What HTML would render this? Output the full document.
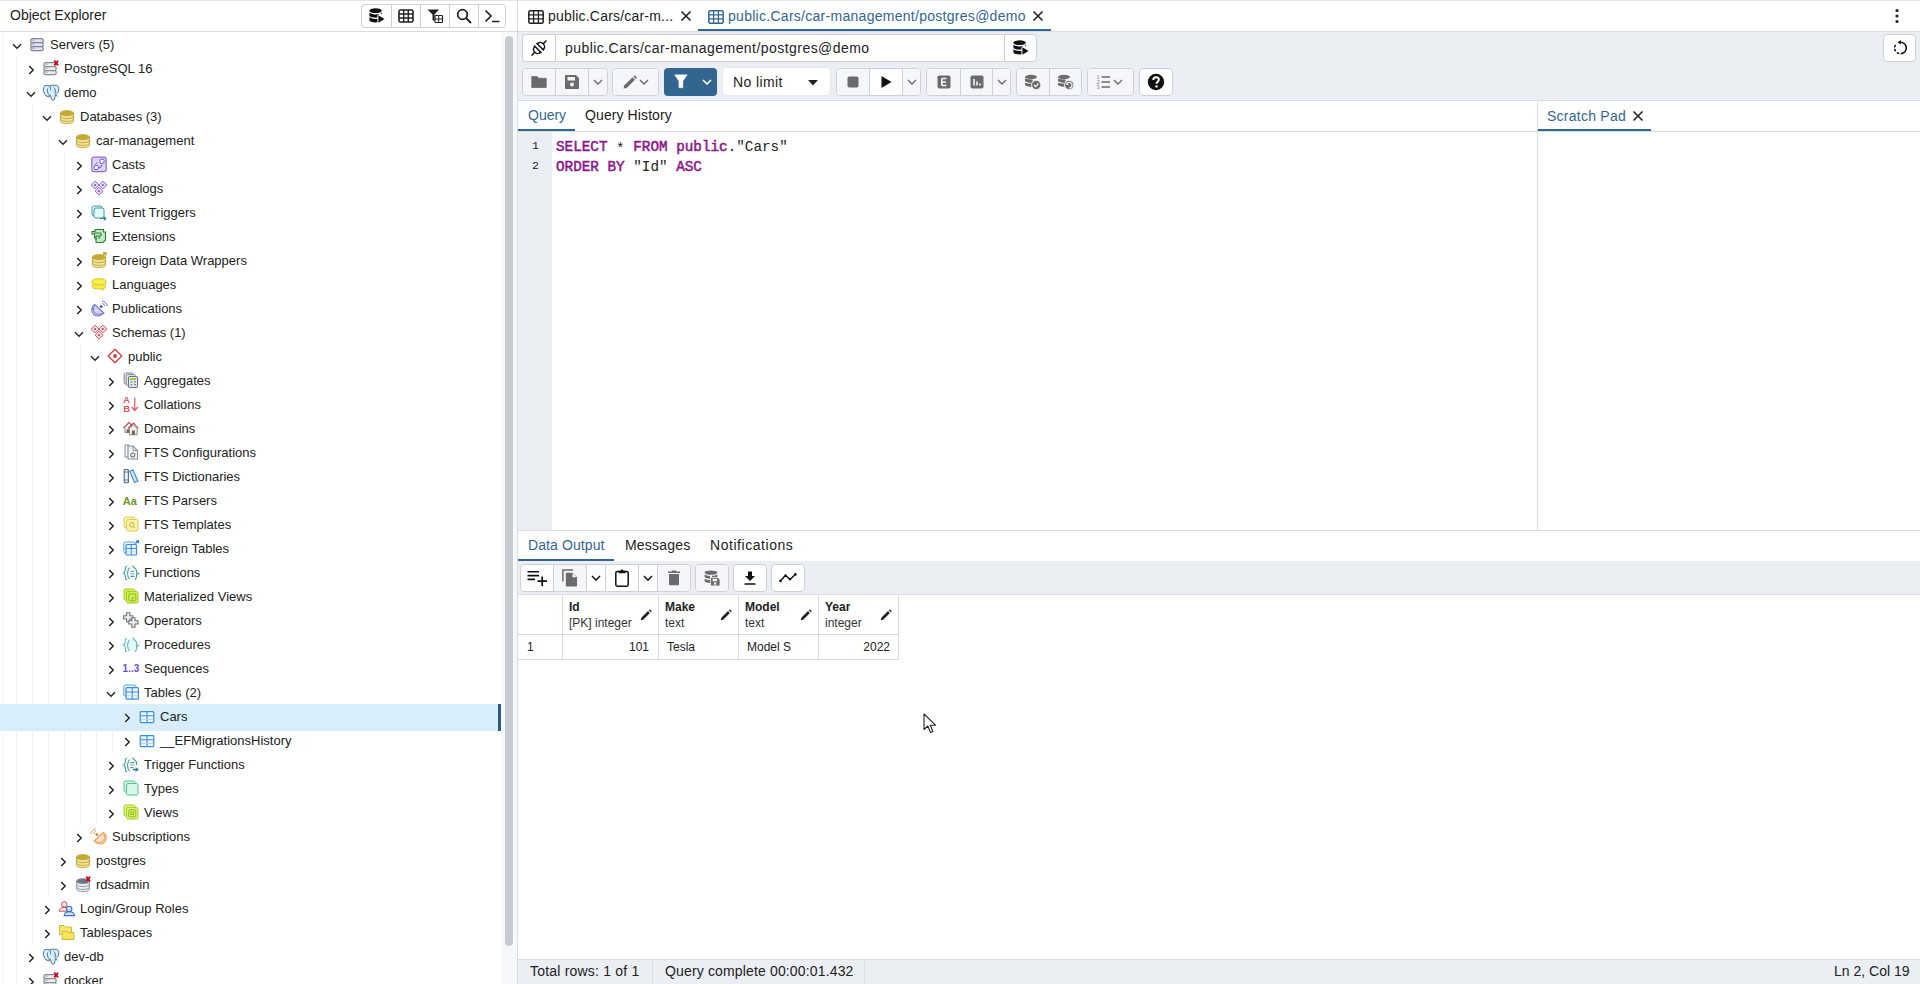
<!DOCTYPE html><html><head><meta charset="utf-8"><style>
*{box-sizing:border-box;margin:0;padding:0}
html,body{width:1920px;height:984px;overflow:hidden;background:#fff;font-family:"Liberation Sans",sans-serif;color:#222;font-size:14px}
.a{position:absolute}
.t{position:absolute;white-space:nowrap;line-height:1}
.bd{background:#d9dce1}
.row{position:absolute;left:0;width:501px;height:24px}
.lbl{position:absolute;top:1px;font-size:13px;line-height:24px;white-space:nowrap;color:#222}
.chev{position:absolute}
.ico{position:absolute;top:4px;width:16px;height:16px}
.btng{position:absolute;border:1px solid #cdd0d6;border-radius:4px;overflow:hidden;display:flex;background:#fff}
.btn{position:relative;height:100%;border-left:1px solid #cdd0d6;display:flex;align-items:center;justify-content:center}
.btn:first-child{border-left:none}
.dis{background:#f5f6f9}
</style></head><body>
<div class="a bd" style="left:0;top:0;width:1920px;height:1px;background:#e3e5ea"></div>
<div class="t" style="left:10px;top:8px;font-size:14px;color:#222">Object Explorer</div>
<div class="a bd" style="left:0;top:31px;width:517px;height:1px"></div>
<div class="a bd" style="left:517px;top:0;width:1px;height:984px"></div>
<div class="btng" style="left:361px;top:4px;width:145px;height:24px"><div class="btn" style="width:29px"><svg width="16" height="16" viewBox="0 0 16 16" style="display:block;overflow:visible"><ellipse cx="6.6" cy="2.7" rx="6.2" ry="2.4" fill="#111"/><path d="M0.4 4.6C1.2 5.8 3.6 6.4 6.6 6.4C8.2 6.4 9.4 6.2 10.4 5.9L8.4 7.4V9.6C7.8 9.7 7.2 9.7 6.6 9.7C3.4 9.7 0.4 8.9 0.4 7.6ZM12.8 4.6V6.4L11.6 5.7C12.2 5.4 12.6 5 12.8 4.6ZM0.4 9.1C1.2 10.3 3.6 10.9 6.6 10.9L8.4 10.8V14.3L6.6 14.4C3.4 14.4 0.4 13.5 0.4 12.2Z" fill="#111"/><path d="M9.4 7.2L15.6 11L9.4 14.8Z" fill="#111"/></svg></div><div class="btn" style="width:29px"><svg width="16" height="16" viewBox="0 0 16 16" style="display:block;overflow:visible"><rect x="1" y="2" width="14" height="12" rx="1.5" fill="none" stroke="#222" stroke-width="1.6"/><path d="M1 6H15M1 10H15M5.7 2V14M10.3 2V14" stroke="#222" stroke-width="1.4"/></svg></div><div class="btn" style="width:29px"><svg width="16" height="16" viewBox="0 0 16 16" style="display:block;overflow:visible"><path d="M0.5 1.5H12L7.5 6.5V13.5L5.5 12V6.5Z" fill="#222"/><rect x="8" y="7.5" width="7.5" height="7" rx="0.8" fill="none" stroke="#222" stroke-width="1.2"/><path d="M8 11H15.5M11.7 7.5V14.5" stroke="#222" stroke-width="1"/></svg></div><div class="btn" style="width:29px"><svg width="16" height="16" viewBox="0 0 16 16" style="display:block;overflow:visible"><circle cx="6.5" cy="6.5" r="4.8" fill="none" stroke="#222" stroke-width="1.8"/><path d="M10 10L15 15" stroke="#222" stroke-width="2"/></svg></div><div class="btn" style="width:27px"><svg width="16" height="16" viewBox="0 0 16 16" style="display:block;overflow:visible"><path d="M1.5 2.5L7 8L1.5 13.5" fill="none" stroke="#222" stroke-width="1.7"/><path d="M8 13.5H15.5" stroke="#222" stroke-width="1.6"/></svg></div></div>
<div class="a" style="left:501px;top:32px;width:16px;height:952px;background:#f7f8f9"></div>
<div class="a" style="left:505px;top:36px;width:8px;height:910px;background:#c8ccd2;border-radius:4px"></div>
<div class="a" style="left:0;top:32px;width:501px;height:952px;overflow:hidden">
<div class="a" style="left:2px;top:1px;width:1px;height:952px;background:#f4f5f6"></div>
<div class="a" style="left:16px;top:24px;width:1px;height:936px;background:#f1f2f4"></div>
<div class="a" style="left:32px;top:72px;width:1px;height:840px;background:#f1f2f4"></div>
<div class="a" style="left:48px;top:96px;width:1px;height:768px;background:#f1f2f4"></div>
<div class="a" style="left:64px;top:120px;width:1px;height:696px;background:#f1f2f4"></div>
<div class="a" style="left:80px;top:312px;width:1px;height:480px;background:#f1f2f4"></div>
<div class="a" style="left:96px;top:336px;width:1px;height:456px;background:#f1f2f4"></div>
<div class="a" style="left:112px;top:672px;width:1px;height:48px;background:#f1f2f4"></div>
<div class="row" style="top:0px">
<svg class="chev" style="left:12px;top:11px" width="10" height="7" viewBox="0 0 10 7"><path d="M1 1.2L5 5.2L9 1.2" fill="none" stroke="#222" stroke-width="1.4"/></svg>
<div class="ico" style="left:29px"><svg width="16" height="16" viewBox="0 0 16 16" style="display:block;overflow:visible"><rect x="1.7" y="2.6" width="12.6" height="4" rx="2" fill="#e4e5f2" stroke="#7d8290" stroke-width="1.1"/><path d="M3.5 4.2h2" stroke="#7d8290" stroke-width="0.9"/><rect x="1.7" y="6.6" width="12.6" height="4" rx="2" fill="#e4e5f2" stroke="#7d8290" stroke-width="1.1"/><path d="M3.5 8.2h2" stroke="#7d8290" stroke-width="0.9"/><rect x="1.7" y="10.6" width="12.6" height="4" rx="2" fill="#e4e5f2" stroke="#7d8290" stroke-width="1.1"/><path d="M3.5 12.2h2" stroke="#7d8290" stroke-width="0.9"/></svg></div>
<div class="lbl" style="left:50px">Servers (5)</div>
</div>
<div class="row" style="top:24px">
<svg class="chev" style="left:28px;top:9px" width="7" height="10" viewBox="0 0 7 10"><path d="M1.2 1L5.2 5L1.2 9" fill="none" stroke="#222" stroke-width="1.4"/></svg>
<div class="ico" style="left:43px"><svg width="16" height="16" viewBox="0 0 16 16" style="display:block;overflow:visible"><rect x="0.7" y="2.6" width="12.6" height="4" rx="2" fill="#eceef0" stroke="#8a8d94" stroke-width="1.1"/><path d="M2.5 4.2h2" stroke="#8a8d94" stroke-width="0.9"/><rect x="0.7" y="6.6" width="12.6" height="4" rx="2" fill="#eceef0" stroke="#8a8d94" stroke-width="1.1"/><path d="M2.5 8.2h2" stroke="#8a8d94" stroke-width="0.9"/><rect x="0.7" y="10.6" width="12.6" height="4" rx="2" fill="#eceef0" stroke="#8a8d94" stroke-width="1.1"/><path d="M2.5 12.2h2" stroke="#8a8d94" stroke-width="0.9"/><path d="M11.2 0.6L15.2 5.2M15.2 0.6L11.2 5.2" stroke="#d0021b" stroke-width="1.7"/></svg></div>
<div class="lbl" style="left:64px">PostgreSQL 16</div>
</div>
<div class="row" style="top:48px">
<svg class="chev" style="left:26px;top:11px" width="10" height="7" viewBox="0 0 10 7"><path d="M1 1.2L5 5.2L9 1.2" fill="none" stroke="#222" stroke-width="1.4"/></svg>
<div class="ico" style="left:43px"><svg width="16" height="16" viewBox="0 0 16 16" style="display:block;overflow:visible"><path d="M1.2 2.4C2 1.2 4.5 1 6.6 2C8 1 11.5 1 13.8 1.5C15.5 2.2 16 3.8 15.7 6C15.4 8 14 9.5 12.4 10.6C12 13 11.8 15 10.8 16C9.8 16.8 8.8 16.2 8.4 15C8 13.5 8 12.5 7.5 11.5C6 12 4 12.8 3 12C1.5 10.5 0.3 7 0.3 5C0.3 3.8 0.6 2.9 1.2 2.4Z" fill="#d6effb" stroke="#4b7094" stroke-width="1"/><path d="M4.6 4.5C4.2 7 4.6 9.5 6.2 10.8M10.4 3.4C12 4 12.5 6 12.3 9.4M12.5 10.6L14.8 12.6M7.3 11.2L5.3 13.4M6.6 2C7.5 3.5 7.8 5 7.6 6.5" fill="none" stroke="#4b7094" stroke-width="1"/></svg></div>
<div class="lbl" style="left:64px">demo</div>
</div>
<div class="row" style="top:72px">
<svg class="chev" style="left:42px;top:11px" width="10" height="7" viewBox="0 0 10 7"><path d="M1 1.2L5 5.2L9 1.2" fill="none" stroke="#222" stroke-width="1.4"/></svg>
<div class="ico" style="left:59px"><svg width="16" height="16" viewBox="0 0 16 16" style="display:block;overflow:visible"><path d="M1.6 5.2V13.2C1.6 14.6 4.5 15.6 8 15.6C11.5 15.6 14.4 14.6 14.4 13.2V5.2" fill="#f3e7a0" stroke="#bfa432" stroke-width="1"/><path d="M1.6 8.2C1.6 9.6 4.5 10.6 8 10.6C11.5 10.6 14.4 9.6 14.4 8.2M1.6 11C1.6 12.4 4.5 13.4 8 13.4C11.5 13.4 14.4 12.4 14.4 11" fill="none" stroke="#bfa432" stroke-width="1"/><ellipse cx="8" cy="5.2" rx="6.4" ry="2.6" fill="#c6ab38" stroke="#bfa432" stroke-width="0.8"/></svg></div>
<div class="lbl" style="left:80px">Databases (3)</div>
</div>
<div class="row" style="top:96px">
<svg class="chev" style="left:58px;top:11px" width="10" height="7" viewBox="0 0 10 7"><path d="M1 1.2L5 5.2L9 1.2" fill="none" stroke="#222" stroke-width="1.4"/></svg>
<div class="ico" style="left:75px"><svg width="16" height="16" viewBox="0 0 16 16" style="display:block;overflow:visible"><path d="M1.6 5.2V13.2C1.6 14.6 4.5 15.6 8 15.6C11.5 15.6 14.4 14.6 14.4 13.2V5.2" fill="#f3e7a0" stroke="#bfa432" stroke-width="1"/><path d="M1.6 8.2C1.6 9.6 4.5 10.6 8 10.6C11.5 10.6 14.4 9.6 14.4 8.2M1.6 11C1.6 12.4 4.5 13.4 8 13.4C11.5 13.4 14.4 12.4 14.4 11" fill="none" stroke="#bfa432" stroke-width="1"/><ellipse cx="8" cy="5.2" rx="6.4" ry="2.6" fill="#c6ab38" stroke="#bfa432" stroke-width="0.8"/></svg></div>
<div class="lbl" style="left:96px">car-management</div>
</div>
<div class="row" style="top:120px">
<svg class="chev" style="left:76px;top:9px" width="7" height="10" viewBox="0 0 7 10"><path d="M1.2 1L5.2 5L1.2 9" fill="none" stroke="#222" stroke-width="1.4"/></svg>
<div class="ico" style="left:91px"><svg width="16" height="16" viewBox="0 0 16 16" style="display:block;overflow:visible"><rect x="0.8" y="1.2" width="14.4" height="14.4" rx="2" fill="#dcd3f6" stroke="#8b70d2" stroke-width="1.2"/><rect x="9" y="3.2" width="4" height="4" rx="1" fill="#fff" stroke="#6f52c4" stroke-width="1"/><rect x="3.2" y="9.5" width="4" height="4" rx="1" fill="#fff" stroke="#6f52c4" stroke-width="1"/><path d="M4.5 8.5L6 6.5M7.5 12L10 11L11 8.5" fill="none" stroke="#6f52c4" stroke-width="1"/></svg></div>
<div class="lbl" style="left:112px">Casts</div>
</div>
<div class="row" style="top:144px">
<svg class="chev" style="left:76px;top:9px" width="7" height="10" viewBox="0 0 7 10"><path d="M1.2 1L5.2 5L1.2 9" fill="none" stroke="#222" stroke-width="1.4"/></svg>
<div class="ico" style="left:91px"><svg width="16" height="16" viewBox="0 0 16 16" style="display:block;overflow:visible"><path d="M4.2 1.1L8.1 5L4.2 8.9L0.30000000000000027 5Z" fill="#e6dcfb" stroke="#8a68d8" stroke-width="1"/><circle cx="4.2" cy="5" r="1" fill="#6a4fc0"/><path d="M11.8 1.1L15.700000000000001 5L11.8 8.9L7.9 5Z" fill="#e6dcfb" stroke="#8a68d8" stroke-width="1"/><circle cx="11.8" cy="5" r="1" fill="#6a4fc0"/><path d="M8 7.299999999999999L11.9 11.2L8 15.1L4.1 11.2Z" fill="#e6dcfb" stroke="#8a68d8" stroke-width="1"/><circle cx="8" cy="11.2" r="1" fill="#6a4fc0"/></svg></div>
<div class="lbl" style="left:112px">Catalogs</div>
</div>
<div class="row" style="top:168px">
<svg class="chev" style="left:76px;top:9px" width="7" height="10" viewBox="0 0 7 10"><path d="M1.2 1L5.2 5L1.2 9" fill="none" stroke="#222" stroke-width="1.4"/></svg>
<div class="ico" style="left:91px"><svg width="16" height="16" viewBox="0 0 16 16" style="display:block;overflow:visible"><rect x="1" y="2" width="10" height="10" rx="2" fill="#e3f8f8" stroke="#3b9ea0" stroke-width="1"/><rect x="3" y="4" width="10" height="10" rx="2" fill="#e3f8f8" stroke="#3b9ea0" stroke-width="1"/><path d="M9 14.5H14.5M12.8 12.6L14.8 14.5L12.8 16.4" fill="none" stroke="#2f8a8c" stroke-width="1.2"/></svg></div>
<div class="lbl" style="left:112px">Event Triggers</div>
</div>
<div class="row" style="top:192px">
<svg class="chev" style="left:76px;top:9px" width="7" height="10" viewBox="0 0 7 10"><path d="M1.2 1L5.2 5L1.2 9" fill="none" stroke="#222" stroke-width="1.4"/></svg>
<div class="ico" style="left:91px"><svg width="16" height="16" viewBox="0 0 16 16" style="display:block;overflow:visible"><path d="M4 1.5H12.5V4H14.5V12L12 14.5H5V10H3.5V6H1V3.5H4Z" fill="#bfe9c3" stroke="#2f7d34" stroke-width="1.1"/><path d="M3 5H10V8H5V12M8 8V11" fill="none" stroke="#2f7d34" stroke-width="1"/></svg></div>
<div class="lbl" style="left:112px">Extensions</div>
</div>
<div class="row" style="top:216px">
<svg class="chev" style="left:76px;top:9px" width="7" height="10" viewBox="0 0 7 10"><path d="M1.2 1L5.2 5L1.2 9" fill="none" stroke="#222" stroke-width="1.4"/></svg>
<div class="ico" style="left:91px"><svg width="16" height="16" viewBox="0 0 16 16" style="display:block;overflow:visible"><path d="M1.6 5.2V13.2C1.6 14.6 4.5 15.6 8 15.6C11.5 15.6 14.4 14.6 14.4 13.2V5.2" fill="#f3e7a0" stroke="#bfa432" stroke-width="1"/><path d="M1.6 8.2C1.6 9.6 4.5 10.6 8 10.6C11.5 10.6 14.4 9.6 14.4 8.2M1.6 11C1.6 12.4 4.5 13.4 8 13.4C11.5 13.4 14.4 12.4 14.4 11" fill="none" stroke="#bfa432" stroke-width="1"/><ellipse cx="8" cy="5.2" rx="6.4" ry="2.6" fill="#c6ab38" stroke="#bfa432" stroke-width="0.8"/><path d="M10.5 4.5L14.5 0.8M12 0.8H14.8V3.6" fill="none" stroke="#c6ab38" stroke-width="1.6"/></svg></div>
<div class="lbl" style="left:112px">Foreign Data Wrappers</div>
</div>
<div class="row" style="top:240px">
<svg class="chev" style="left:76px;top:9px" width="7" height="10" viewBox="0 0 7 10"><path d="M1.2 1L5.2 5L1.2 9" fill="none" stroke="#222" stroke-width="1.4"/></svg>
<div class="ico" style="left:91px"><svg width="16" height="16" viewBox="0 0 16 16" style="display:block;overflow:visible"><path d="M1 6C1 3.5 4 2.8 8 2.8C12 2.8 15 3.5 15 6C15 7.2 14.3 8 13.5 8.4C14.5 9 14.8 9.8 14.5 11C14.1 12.3 12.5 12.6 11.8 12.6L12 14.6L10 12.8C8 12.9 2.2 13 1.3 11C0.9 10 1.3 9 2.4 8.4C1.5 7.9 1 7.2 1 6Z" fill="#f9ec4c" stroke="#d9c41d" stroke-width="1"/><path d="M2.6 8.4C6 9.2 10 9.2 13.5 8.4" fill="none" stroke="#d9c41d" stroke-width="1"/></svg></div>
<div class="lbl" style="left:112px">Languages</div>
</div>
<div class="row" style="top:264px">
<svg class="chev" style="left:76px;top:9px" width="7" height="10" viewBox="0 0 7 10"><path d="M1.2 1L5.2 5L1.2 9" fill="none" stroke="#222" stroke-width="1.4"/></svg>
<div class="ico" style="left:91px"><svg width="16" height="16" viewBox="0 0 16 16" style="display:block;overflow:visible"><path d="M3.6 4.3L12.9 13.1C10 15.6 6 16.6 3.4 15C0.4 13 -0.6 7.8 3.6 4.3Z" fill="#d2d4f4" stroke="#6c72c9" stroke-width="1.1"/><path d="M3.4 6.2C1.8 8.4 2.2 11.4 4.2 13.2C6.2 14.6 9.2 14.6 11.4 13.4" fill="none" stroke="#6c72c9" stroke-width="0.9"/><circle cx="10.2" cy="6.6" r="1.4" fill="#3f46b0"/><path d="M11.1 3.3C12.3 3.8 13.3 4.7 13.8 5.9M11.1 0.9C13.6 1.6 15.6 3.4 16.4 5.9" fill="none" stroke="#6c72c9" stroke-width="1"/></svg></div>
<div class="lbl" style="left:112px">Publications</div>
</div>
<div class="row" style="top:288px">
<svg class="chev" style="left:74px;top:11px" width="10" height="7" viewBox="0 0 10 7"><path d="M1 1.2L5 5.2L9 1.2" fill="none" stroke="#222" stroke-width="1.4"/></svg>
<div class="ico" style="left:91px"><svg width="16" height="16" viewBox="0 0 16 16" style="display:block;overflow:visible"><path d="M4.2 1.1L8.1 5L4.2 8.9L0.30000000000000027 5Z" fill="#fde3e3" stroke="#d9535a" stroke-width="1"/><circle cx="4.2" cy="5" r="1" fill="#c9303a"/><path d="M11.8 1.1L15.700000000000001 5L11.8 8.9L7.9 5Z" fill="#fde3e3" stroke="#d9535a" stroke-width="1"/><circle cx="11.8" cy="5" r="1" fill="#c9303a"/><path d="M8 7.299999999999999L11.9 11.2L8 15.1L4.1 11.2Z" fill="#fde3e3" stroke="#d9535a" stroke-width="1"/><circle cx="8" cy="11.2" r="1" fill="#c9303a"/></svg></div>
<div class="lbl" style="left:112px">Schemas (1)</div>
</div>
<div class="row" style="top:312px">
<svg class="chev" style="left:90px;top:11px" width="10" height="7" viewBox="0 0 10 7"><path d="M1 1.2L5 5.2L9 1.2" fill="none" stroke="#222" stroke-width="1.4"/></svg>
<div class="ico" style="left:107px"><svg width="16" height="16" viewBox="0 0 16 16" style="display:block;overflow:visible"><path d="M8 1.2L14.8 8L8 14.8L1.2 8Z" fill="#fff" stroke="#d23f45" stroke-width="1.3"/><circle cx="8" cy="8" r="1.9" fill="#d23f45"/></svg></div>
<div class="lbl" style="left:128px">public</div>
</div>
<div class="row" style="top:336px">
<svg class="chev" style="left:108px;top:9px" width="7" height="10" viewBox="0 0 7 10"><path d="M1.2 1L5.2 5L1.2 9" fill="none" stroke="#222" stroke-width="1.4"/></svg>
<div class="ico" style="left:123px"><svg width="16" height="16" viewBox="0 0 16 16" style="display:block;overflow:visible"><rect x="1.2" y="1" width="9" height="11" rx="1.5" fill="#eceef3" stroke="#7d8290" stroke-width="1"/><rect x="3.2" y="2.6" width="9" height="11" rx="1.5" fill="#eceef3" stroke="#7d8290" stroke-width="1"/><rect x="5.5" y="4.5" width="9" height="11" rx="1.5" fill="#e8ecf3" stroke="#6c717c" stroke-width="1.1"/><rect x="7" y="6" width="6" height="2.2" fill="#9fc93c"/><path d="M7.5 10h2M11 10h2M7.5 12.8h2M11 12.8h2" stroke="#7d8fb0" stroke-width="1.4"/></svg></div>
<div class="lbl" style="left:144px">Aggregates</div>
</div>
<div class="row" style="top:360px">
<svg class="chev" style="left:108px;top:9px" width="7" height="10" viewBox="0 0 7 10"><path d="M1.2 1L5.2 5L1.2 9" fill="none" stroke="#222" stroke-width="1.4"/></svg>
<div class="ico" style="left:123px"><svg width="16" height="16" viewBox="0 0 16 16" style="display:block;overflow:visible"><text x="0" y="7.4" font-family="Liberation Sans" font-weight="bold" font-size="9.6" fill="#dd5a5f">A</text><text x="0.2" y="15.8" font-family="Liberation Sans" font-weight="bold" font-size="9.6" fill="#dd5a5f">B</text><path d="M11.8 1.5V14.2M8.8 11L11.8 14.5L14.8 11" fill="none" stroke="#dd5a5f" stroke-width="1.2"/></svg></div>
<div class="lbl" style="left:144px">Collations</div>
</div>
<div class="row" style="top:384px">
<svg class="chev" style="left:108px;top:9px" width="7" height="10" viewBox="0 0 7 10"><path d="M1.2 1L5.2 5L1.2 9" fill="none" stroke="#222" stroke-width="1.4"/></svg>
<div class="ico" style="left:123px"><svg width="16" height="16" viewBox="0 0 16 16" style="display:block;overflow:visible"><path d="M0.5 8L6 2.5L11 7.5" fill="none" stroke="#c6464e" stroke-width="1.1"/><path d="M2 7.5V12.5H8V7.5" fill="#e6eef2" stroke="#7c8288" stroke-width="0.9"/><path d="M5 8.5L10.5 3L15.5 8.5" fill="none" stroke="#c6464e" stroke-width="1.1"/><path d="M6.5 8.5V14.8H14.2V8.5L10.3 4.7Z" fill="#e6eef2" stroke="#7c8288" stroke-width="0.9"/><rect x="9" y="10.5" width="2.8" height="4.3" fill="#8b5a2b"/><rect x="3.7" y="9.5" width="2.3" height="3" fill="#8b5a2b"/></svg></div>
<div class="lbl" style="left:144px">Domains</div>
</div>
<div class="row" style="top:408px">
<svg class="chev" style="left:108px;top:9px" width="7" height="10" viewBox="0 0 7 10"><path d="M1.2 1L5.2 5L1.2 9" fill="none" stroke="#222" stroke-width="1.4"/></svg>
<div class="ico" style="left:123px"><svg width="16" height="16" viewBox="0 0 16 16" style="display:block;overflow:visible"><path d="M2 1H6V13H2Z" fill="#f4f5f7" stroke="#8a8f98" stroke-width="1"/><path d="M5 2H10L14.5 6.5V15H5Z" fill="#f4f5f7" stroke="#8a8f98" stroke-width="1.1"/><path d="M10 2V6.5H14.5" fill="none" stroke="#8a8f98" stroke-width="1"/><circle cx="9.8" cy="11" r="2" fill="none" stroke="#6e737c" stroke-width="1.1"/></svg></div>
<div class="lbl" style="left:144px">FTS Configurations</div>
</div>
<div class="row" style="top:432px">
<svg class="chev" style="left:108px;top:9px" width="7" height="10" viewBox="0 0 7 10"><path d="M1.2 1L5.2 5L1.2 9" fill="none" stroke="#222" stroke-width="1.4"/></svg>
<div class="ico" style="left:123px"><svg width="16" height="16" viewBox="0 0 16 16" style="display:block;overflow:visible"><rect x="1.2" y="1.5" width="4.2" height="13.3" rx="0.8" fill="#e7f0fa" stroke="#5e6a7c" stroke-width="1.1"/><path d="M1.2 4H5.4M1.2 12H5.4" stroke="#5e6a7c" stroke-width="0.9"/><path d="M6.8 3.2L10 2L14.8 13.2L11.6 14.5Z" fill="#d3e9fb" stroke="#3b8ad8" stroke-width="1.1"/></svg></div>
<div class="lbl" style="left:144px">FTS Dictionaries</div>
</div>
<div class="row" style="top:456px">
<svg class="chev" style="left:108px;top:9px" width="7" height="10" viewBox="0 0 7 10"><path d="M1.2 1L5.2 5L1.2 9" fill="none" stroke="#222" stroke-width="1.4"/></svg>
<div class="ico" style="left:123px"><svg width="16" height="16" viewBox="0 0 16 16" style="display:block;overflow:visible"><text x="-0.3" y="13" font-family="Liberation Sans" font-weight="bold" font-size="11" fill="#6b9a1e">Aa</text></svg></div>
<div class="lbl" style="left:144px">FTS Parsers</div>
</div>
<div class="row" style="top:480px">
<svg class="chev" style="left:108px;top:9px" width="7" height="10" viewBox="0 0 7 10"><path d="M1.2 1L5.2 5L1.2 9" fill="none" stroke="#222" stroke-width="1.4"/></svg>
<div class="ico" style="left:123px"><svg width="16" height="16" viewBox="0 0 16 16" style="display:block;overflow:visible"><rect x="1" y="1" width="11" height="11" rx="2" fill="#faf3a8" stroke="#d8cb58" stroke-width="1"/><rect x="3.5" y="3.5" width="11.5" height="11.5" rx="2" fill="#faf3a8" stroke="#d8cb58" stroke-width="1"/><circle cx="8.8" cy="8.8" r="2.3" fill="none" stroke="#b6a83a" stroke-width="0.9"/><path d="M10.5 10.5L12.3 12.3" stroke="#b6a83a" stroke-width="0.9"/></svg></div>
<div class="lbl" style="left:144px">FTS Templates</div>
</div>
<div class="row" style="top:504px">
<svg class="chev" style="left:108px;top:9px" width="7" height="10" viewBox="0 0 7 10"><path d="M1.2 1L5.2 5L1.2 9" fill="none" stroke="#222" stroke-width="1.4"/></svg>
<div class="ico" style="left:123px"><svg width="16" height="16" viewBox="0 0 16 16" style="display:block;overflow:visible"><rect x="0.8" y="2" width="11" height="11" rx="1.5" fill="#e8f4fd" stroke="#5aa2e0" stroke-width="1"/><rect x="3" y="4.5" width="10.5" height="10.5" rx="1" fill="#eaf5fd" stroke="#3a8fd9" stroke-width="1.2"/><path d="M3 8.49H13.5 M8.25 4.5V15.0" stroke="#3a8fd9" stroke-width="1.1"/><path d="M4 11.85H12.5" stroke="#c4c9d0" stroke-width="0.9"/><path d="M12.5 3.5L15.3 0.8M13.2 0.8H15.4V3" fill="none" stroke="#2c7bd0" stroke-width="1.2"/></svg></div>
<div class="lbl" style="left:144px">Foreign Tables</div>
</div>
<div class="row" style="top:528px">
<svg class="chev" style="left:108px;top:9px" width="7" height="10" viewBox="0 0 7 10"><path d="M1.2 1L5.2 5L1.2 9" fill="none" stroke="#222" stroke-width="1.4"/></svg>
<div class="ico" style="left:123px"><svg width="16" height="16" viewBox="0 0 16 16" style="display:block;overflow:visible"><path d="M3.8 2C2.4 2.3 2.3 3.5 2.3 5.5C2.3 7.5 2 8.5 0.6 9C2 9.5 2.3 10.5 2.3 12.5C2.3 14.5 2.6 15.5 3.8 15.8 M6.6 3.6C4.9 5.2 4.6 7.6 4.6 9.4C4.6 11.2 4.9 13.4 6.6 15.2 M9.2 2C11 2.4 11.3 4 12.6 4.8C13.6 5.5 13.7 7.5 13.7 9L15.4 9.6L13.7 10.2C13.7 12.5 13.6 14.5 11.8 15.8" fill="none" stroke="#3f9b9c" stroke-width="1.1"/><path d="M7.4 7.2H11.4M7.4 12.4H11.4" stroke="#3f9b9c" stroke-width="1.1"/><path d="M7.4 9.8H11.4" stroke="#8fb5b6" stroke-width="1.3"/></svg></div>
<div class="lbl" style="left:144px">Functions</div>
</div>
<div class="row" style="top:552px">
<svg class="chev" style="left:108px;top:9px" width="7" height="10" viewBox="0 0 7 10"><path d="M1.2 1L5.2 5L1.2 9" fill="none" stroke="#222" stroke-width="1.4"/></svg>
<div class="ico" style="left:123px"><svg width="16" height="16" viewBox="0 0 16 16" style="display:block;overflow:visible"><rect x="1" y="1" width="11" height="11" rx="1.5" fill="#d3f05a" stroke="#a2cc22" stroke-width="1"/><rect x="3.5" y="3.5" width="11.5" height="11.5" rx="1.5" fill="#d3f05a" stroke="#a2cc22" stroke-width="1"/><rect x="5.8" y="5.8" width="7" height="7" rx="1" fill="none" stroke="#8cb81a" stroke-width="1"/><path d="M9.3 12.8V9.3H11" fill="none" stroke="#8cb81a" stroke-width="1"/></svg></div>
<div class="lbl" style="left:144px">Materialized Views</div>
</div>
<div class="row" style="top:576px">
<svg class="chev" style="left:108px;top:9px" width="7" height="10" viewBox="0 0 7 10"><path d="M1.2 1L5.2 5L1.2 9" fill="none" stroke="#222" stroke-width="1.4"/></svg>
<div class="ico" style="left:123px"><svg width="16" height="16" viewBox="0 0 16 16" style="display:block;overflow:visible"><path d="M3.6 0.8H6.8V3.8H9.8V7H6.8V10H3.6V7H0.6V3.8H3.6Z" fill="#eceef1" stroke="#6d7178" stroke-width="1.1"/><path d="M8.8 5.8H12V8.8H15V12H12V15.2H8.8V12H5.8V8.8H8.8Z" fill="#eceef1" stroke="#6d7178" stroke-width="1.1"/></svg></div>
<div class="lbl" style="left:144px">Operators</div>
</div>
<div class="row" style="top:600px">
<svg class="chev" style="left:108px;top:9px" width="7" height="10" viewBox="0 0 7 10"><path d="M1.2 1L5.2 5L1.2 9" fill="none" stroke="#222" stroke-width="1.4"/></svg>
<div class="ico" style="left:123px"><svg width="16" height="16" viewBox="0 0 16 16" style="display:block;overflow:visible"><path d="M5.5 9.4C5.5 6 8 3.6 10 3.6C12 3.6 13 6.5 13 9.4C13 12.3 12 15.2 10 15.2C8 15.2 5.5 12.8 5.5 9.4Z" fill="#e2f9fb" stroke="none"/><path d="M3.8 2C2.4 2.3 2.3 3.5 2.3 5.5C2.3 7.5 2 8.5 0.6 9C2 9.5 2.3 10.5 2.3 12.5C2.3 14.5 2.6 15.5 3.8 15.8 M6.6 3.6C4.9 5.2 4.6 7.6 4.6 9.4C4.6 11.2 4.9 13.4 6.6 15.2 M9.2 2C11 2.4 11.3 4 12.6 4.8C13.6 5.5 13.7 7.5 13.7 9L15.4 9.6L13.7 10.2C13.7 12.5 13.6 14.5 11.8 15.8" fill="none" stroke="#56b8ba" stroke-width="1.1"/></svg></div>
<div class="lbl" style="left:144px">Procedures</div>
</div>
<div class="row" style="top:624px">
<svg class="chev" style="left:108px;top:9px" width="7" height="10" viewBox="0 0 7 10"><path d="M1.2 1L5.2 5L1.2 9" fill="none" stroke="#222" stroke-width="1.4"/></svg>
<div class="ico" style="left:123px"><svg width="16" height="16" viewBox="0 0 16 16" style="display:block;overflow:visible"><text x="-0.4" y="12" font-family="Liberation Sans" font-weight="bold" font-size="10" fill="#6c4fbf">1..3</text></svg></div>
<div class="lbl" style="left:144px">Sequences</div>
</div>
<div class="row" style="top:648px">
<svg class="chev" style="left:106px;top:11px" width="10" height="7" viewBox="0 0 10 7"><path d="M1 1.2L5 5.2L9 1.2" fill="none" stroke="#222" stroke-width="1.4"/></svg>
<div class="ico" style="left:123px"><svg width="16" height="16" viewBox="0 0 16 16" style="display:block;overflow:visible"><rect x="0.8" y="1" width="12" height="11" rx="1.5" fill="#e8f4fd" stroke="#5aa2e0" stroke-width="1"/><rect x="3" y="3.6" width="12.4" height="11.6" rx="1" fill="#eaf5fd" stroke="#3a8fd9" stroke-width="1.2"/><path d="M3 8.008H15.4 M9.2 3.6V15.2" stroke="#3a8fd9" stroke-width="1.1"/><path d="M4 11.719999999999999H14.4" stroke="#c4c9d0" stroke-width="0.9"/></svg></div>
<div class="lbl" style="left:144px">Tables (2)</div>
</div>
<div class="row" style="top:672px">
<div class="a" style="left:0;top:0;width:501px;height:27px;background:#d8eefa"></div><div class="a" style="left:498px;top:0;width:3px;height:27px;background:#2c5b80"></div>
<svg class="chev" style="left:124px;top:9px" width="7" height="10" viewBox="0 0 7 10"><path d="M1.2 1L5.2 5L1.2 9" fill="none" stroke="#222" stroke-width="1.4"/></svg>
<div class="ico" style="left:139px"><svg width="16" height="16" viewBox="0 0 16 16" style="display:block;overflow:visible"><rect x="1.2" y="3.6" width="13.6" height="11" rx="1" fill="#eaf5fd" stroke="#3a8fd9" stroke-width="1.2"/><path d="M1.2 7.779999999999999H14.799999999999999 M8.0 3.6V14.6" stroke="#3a8fd9" stroke-width="1.1"/><path d="M2.2 11.299999999999999H13.799999999999999" stroke="#c4c9d0" stroke-width="0.9"/></svg></div>
<div class="lbl" style="left:160px">Cars</div>
</div>
<div class="row" style="top:696px">
<svg class="chev" style="left:124px;top:9px" width="7" height="10" viewBox="0 0 7 10"><path d="M1.2 1L5.2 5L1.2 9" fill="none" stroke="#222" stroke-width="1.4"/></svg>
<div class="ico" style="left:139px"><svg width="16" height="16" viewBox="0 0 16 16" style="display:block;overflow:visible"><rect x="1.2" y="3.6" width="13.6" height="11" rx="1" fill="#eaf5fd" stroke="#3a8fd9" stroke-width="1.2"/><path d="M1.2 7.779999999999999H14.799999999999999 M8.0 3.6V14.6" stroke="#3a8fd9" stroke-width="1.1"/><path d="M2.2 11.299999999999999H13.799999999999999" stroke="#c4c9d0" stroke-width="0.9"/></svg></div>
<div class="lbl" style="left:160px">__EFMigrationsHistory</div>
</div>
<div class="row" style="top:720px">
<svg class="chev" style="left:108px;top:9px" width="7" height="10" viewBox="0 0 7 10"><path d="M1.2 1L5.2 5L1.2 9" fill="none" stroke="#222" stroke-width="1.4"/></svg>
<div class="ico" style="left:123px"><svg width="16" height="16" viewBox="0 0 16 16" style="display:block;overflow:visible"><path d="M3.8 2C2.4 2.3 2.3 3.5 2.3 5.5C2.3 7.5 2 8.5 0.6 9C2 9.5 2.3 10.5 2.3 12.5C2.3 14.5 2.6 15.5 3.8 15.8 M6.6 3.6C4.9 5.2 4.6 7.6 4.6 9.4C4.6 11.2 4.9 13.4 6.6 15.2 M9.2 2C11 2.4 11.3 4 12.6 4.8C13.6 5.5 13.7 7.5 13.7 9" fill="none" stroke="#3f9b9c" stroke-width="1.1"/><path d="M7.4 6.6H11.4M7.4 11.6H10.5" stroke="#3f9b9c" stroke-width="1.1"/><path d="M7.4 9.1H11.4" stroke="#8fb5b6" stroke-width="1.3"/><path d="M10 13.6H13.2" stroke="#2f7f8a" stroke-width="1.5"/><path d="M12.6 11.2L16 13.6L12.6 16Z" fill="#2f7f8a"/></svg></div>
<div class="lbl" style="left:144px">Trigger Functions</div>
</div>
<div class="row" style="top:744px">
<svg class="chev" style="left:108px;top:9px" width="7" height="10" viewBox="0 0 7 10"><path d="M1.2 1L5.2 5L1.2 9" fill="none" stroke="#222" stroke-width="1.4"/></svg>
<div class="ico" style="left:123px"><svg width="16" height="16" viewBox="0 0 16 16" style="display:block;overflow:visible"><rect x="1" y="1" width="11" height="11" rx="1.5" fill="#d6f7e8" stroke="#53c08d" stroke-width="1"/><rect x="3.5" y="3.5" width="11.5" height="11.5" rx="1.5" fill="#d6f7e8" stroke="#53c08d" stroke-width="1"/></svg></div>
<div class="lbl" style="left:144px">Types</div>
</div>
<div class="row" style="top:768px">
<svg class="chev" style="left:108px;top:9px" width="7" height="10" viewBox="0 0 7 10"><path d="M1.2 1L5.2 5L1.2 9" fill="none" stroke="#222" stroke-width="1.4"/></svg>
<div class="ico" style="left:123px"><svg width="16" height="16" viewBox="0 0 16 16" style="display:block;overflow:visible"><rect x="1" y="1" width="11" height="11" rx="1.5" fill="#dcf27a" stroke="#a8cf2a" stroke-width="1"/><rect x="3.5" y="3.5" width="11.5" height="11.5" rx="1.5" fill="#dcf27a" stroke="#a8cf2a" stroke-width="1"/><rect x="5.8" y="5.8" width="7" height="7" rx="0.5" fill="none" stroke="#92bd1e" stroke-width="1"/><rect x="8" y="8" width="2.6" height="2.6" fill="none" stroke="#92bd1e" stroke-width="1"/></svg></div>
<div class="lbl" style="left:144px">Views</div>
</div>
<div class="row" style="top:792px">
<svg class="chev" style="left:76px;top:9px" width="7" height="10" viewBox="0 0 7 10"><path d="M1.2 1L5.2 5L1.2 9" fill="none" stroke="#222" stroke-width="1.4"/></svg>
<div class="ico" style="left:91px"><svg width="16" height="16" viewBox="0 0 16 16" style="display:block;overflow:visible"><g transform="translate(16,0) scale(-1,1)"><path d="M3.6 4.3L12.9 13.1C10 15.6 6 16.6 3.4 15C0.4 13 -0.6 7.8 3.6 4.3Z" fill="#fde3c8" stroke="#ef9a48" stroke-width="1.1"/><path d="M3.4 6.2C1.8 8.4 2.2 11.4 4.2 13.2C6.2 14.6 9.2 14.6 11.4 13.4" fill="none" stroke="#ef9a48" stroke-width="0.9"/><circle cx="10.2" cy="6.6" r="1.4" fill="#e07b1a"/><path d="M11.1 3.3C12.3 3.8 13.3 4.7 13.8 5.9M11.1 0.9C13.6 1.6 15.6 3.4 16.4 5.9" fill="none" stroke="#ef9a48" stroke-width="1"/></g></svg></div>
<div class="lbl" style="left:112px">Subscriptions</div>
</div>
<div class="row" style="top:816px">
<svg class="chev" style="left:60px;top:9px" width="7" height="10" viewBox="0 0 7 10"><path d="M1.2 1L5.2 5L1.2 9" fill="none" stroke="#222" stroke-width="1.4"/></svg>
<div class="ico" style="left:75px"><svg width="16" height="16" viewBox="0 0 16 16" style="display:block;overflow:visible"><path d="M1.6 5.2V13.2C1.6 14.6 4.5 15.6 8 15.6C11.5 15.6 14.4 14.6 14.4 13.2V5.2" fill="#f3e7a0" stroke="#bfa432" stroke-width="1"/><path d="M1.6 8.2C1.6 9.6 4.5 10.6 8 10.6C11.5 10.6 14.4 9.6 14.4 8.2M1.6 11C1.6 12.4 4.5 13.4 8 13.4C11.5 13.4 14.4 12.4 14.4 11" fill="none" stroke="#bfa432" stroke-width="1"/><ellipse cx="8" cy="5.2" rx="6.4" ry="2.6" fill="#c6ab38" stroke="#bfa432" stroke-width="0.8"/></svg></div>
<div class="lbl" style="left:96px">postgres</div>
</div>
<div class="row" style="top:840px">
<svg class="chev" style="left:60px;top:9px" width="7" height="10" viewBox="0 0 7 10"><path d="M1.2 1L5.2 5L1.2 9" fill="none" stroke="#222" stroke-width="1.4"/></svg>
<div class="ico" style="left:75px"><svg width="16" height="16" viewBox="0 0 16 16" style="display:block;overflow:visible"><path d="M1.6 5.2V13.2C1.6 14.6 4.5 15.6 8 15.6C11.5 15.6 14.4 14.6 14.4 13.2V5.2" fill="#eef0f3" stroke="#8b93a0" stroke-width="1"/><path d="M1.6 8.2C1.6 9.6 4.5 10.6 8 10.6C11.5 10.6 14.4 9.6 14.4 8.2M1.6 11C1.6 12.4 4.5 13.4 8 13.4C11.5 13.4 14.4 12.4 14.4 11" fill="none" stroke="#8b93a0" stroke-width="1"/><ellipse cx="8" cy="5.2" rx="6.4" ry="2.6" fill="#6b7484" stroke="#8b93a0" stroke-width="0.8"/><path d="M11.2 0.6L15.2 5.2M15.2 0.6L11.2 5.2" stroke="#d0021b" stroke-width="1.7"/></svg></div>
<div class="lbl" style="left:96px">rdsadmin</div>
</div>
<div class="row" style="top:864px">
<svg class="chev" style="left:44px;top:9px" width="7" height="10" viewBox="0 0 7 10"><path d="M1.2 1L5.2 5L1.2 9" fill="none" stroke="#222" stroke-width="1.4"/></svg>
<div class="ico" style="left:59px"><svg width="16" height="16" viewBox="0 0 16 16" style="display:block;overflow:visible"><path d="M0.2 11.2C0.4 8.6 2.2 7.4 5.3 7.4C8.4 7.4 10 8.6 10.3 11.2Z" fill="#fbe3e3" stroke="#c9545c" stroke-width="1"/><circle cx="5.3" cy="4.3" r="2.7" fill="#fbe3e3" stroke="#c9545c" stroke-width="1"/><path d="M5.2 15.6C5.4 13 7.2 11.8 10.3 11.8C13.4 11.8 15.2 13 15.5 15.6Z" fill="#cfe2fb" stroke="#3f6fc4" stroke-width="1.1"/><circle cx="10.2" cy="9" r="2.7" fill="#cfe2fb" stroke="#3f6fc4" stroke-width="1.1"/></svg></div>
<div class="lbl" style="left:80px">Login/Group Roles</div>
</div>
<div class="row" style="top:888px">
<svg class="chev" style="left:44px;top:9px" width="7" height="10" viewBox="0 0 7 10"><path d="M1.2 1L5.2 5L1.2 9" fill="none" stroke="#222" stroke-width="1.4"/></svg>
<div class="ico" style="left:59px"><svg width="16" height="16" viewBox="0 0 16 16" style="display:block;overflow:visible"><path d="M0.5 1.5H5L6.2 3H12.5V10.5H0.5Z" fill="#f6e86a" stroke="#cdb935" stroke-width="1"/><path d="M3.2 7.2H7.6L8.8 8.6H15V15.4H3.2Z" fill="#f8e45a" stroke="#cdb935" stroke-width="1"/></svg></div>
<div class="lbl" style="left:80px">Tablespaces</div>
</div>
<div class="row" style="top:912px">
<svg class="chev" style="left:28px;top:9px" width="7" height="10" viewBox="0 0 7 10"><path d="M1.2 1L5.2 5L1.2 9" fill="none" stroke="#222" stroke-width="1.4"/></svg>
<div class="ico" style="left:43px"><svg width="16" height="16" viewBox="0 0 16 16" style="display:block;overflow:visible"><path d="M1.2 2.4C2 1.2 4.5 1 6.6 2C8 1 11.5 1 13.8 1.5C15.5 2.2 16 3.8 15.7 6C15.4 8 14 9.5 12.4 10.6C12 13 11.8 15 10.8 16C9.8 16.8 8.8 16.2 8.4 15C8 13.5 8 12.5 7.5 11.5C6 12 4 12.8 3 12C1.5 10.5 0.3 7 0.3 5C0.3 3.8 0.6 2.9 1.2 2.4Z" fill="#d6effb" stroke="#4b7094" stroke-width="1"/><path d="M4.6 4.5C4.2 7 4.6 9.5 6.2 10.8M10.4 3.4C12 4 12.5 6 12.3 9.4M12.5 10.6L14.8 12.6M7.3 11.2L5.3 13.4M6.6 2C7.5 3.5 7.8 5 7.6 6.5" fill="none" stroke="#4b7094" stroke-width="1"/></svg></div>
<div class="lbl" style="left:64px">dev-db</div>
</div>
<div class="row" style="top:936px">
<svg class="chev" style="left:28px;top:9px" width="7" height="10" viewBox="0 0 7 10"><path d="M1.2 1L5.2 5L1.2 9" fill="none" stroke="#222" stroke-width="1.4"/></svg>
<div class="ico" style="left:43px"><svg width="16" height="16" viewBox="0 0 16 16" style="display:block;overflow:visible"><rect x="0.7" y="2.6" width="12.6" height="4" rx="2" fill="#eceef0" stroke="#8a8d94" stroke-width="1.1"/><path d="M2.5 4.2h2" stroke="#8a8d94" stroke-width="0.9"/><rect x="0.7" y="6.6" width="12.6" height="4" rx="2" fill="#eceef0" stroke="#8a8d94" stroke-width="1.1"/><path d="M2.5 8.2h2" stroke="#8a8d94" stroke-width="0.9"/><rect x="0.7" y="10.6" width="12.6" height="4" rx="2" fill="#eceef0" stroke="#8a8d94" stroke-width="1.1"/><path d="M2.5 12.2h2" stroke="#8a8d94" stroke-width="0.9"/><path d="M11.2 0.6L15.2 5.2M15.2 0.6L11.2 5.2" stroke="#d0021b" stroke-width="1.7"/></svg></div>
<div class="lbl" style="left:64px">docker</div>
</div>
</div>
<div class="a bd" style="left:518px;top:31px;width:1402px;height:1px"></div>
<div class="a" style="left:528px;top:10px;width:16px;height:14px"><svg width="16" height="14" viewBox="0 0 16 14" style="display:block;overflow:visible"><rect x="0.8" y="0.8" width="14.4" height="12.4" rx="1.5" fill="none" stroke="#222" stroke-width="1.5"/><path d="M0.8 4.8H15.2M0.8 8.8H15.2M5.6 0.8V13.2M10.4 0.8V13.2" stroke="#222" stroke-width="1.3"/></svg></div>
<div class="t" style="left:548px;top:9px;font-size:14px;letter-spacing:0.2px">public.Cars/car-m...</div>
<div class="a" style="left:680px;top:10px"><svg width="12" height="12" viewBox="0 0 12 12" style="display:block;overflow:visible"><path d="M1.5 1.5L10.5 10.5M10.5 1.5L1.5 10.5" stroke="#222" stroke-width="1.6"/></svg></div>
<div class="a" style="left:698px;top:29px;width:353px;height:2px;background:#326690"></div>
<div class="a" style="left:708px;top:10px;width:16px;height:14px"><svg width="16" height="14" viewBox="0 0 16 14" style="display:block;overflow:visible"><rect x="0.8" y="0.8" width="14.4" height="12.4" rx="1.5" fill="none" stroke="#326690" stroke-width="1.5"/><path d="M0.8 4.8H15.2M0.8 8.8H15.2M5.6 0.8V13.2M10.4 0.8V13.2" stroke="#326690" stroke-width="1.3"/></svg></div>
<div class="t" style="left:728px;top:9px;font-size:14px;color:#326690;letter-spacing:0.28px">public.Cars/car-management/postgres@demo</div>
<div class="a" style="left:1032px;top:10px"><svg width="12" height="12" viewBox="0 0 12 12" style="display:block;overflow:visible"><path d="M1.5 1.5L10.5 10.5M10.5 1.5L1.5 10.5" stroke="#222" stroke-width="1.6"/></svg></div>
<div class="a" style="left:1895px;top:8px"><svg width="4" height="16" viewBox="0 0 4 16" style="display:block;overflow:visible"><circle cx="2" cy="2.5" r="1.6" fill="#222"/><circle cx="2" cy="8" r="1.6" fill="#222"/><circle cx="2" cy="13.5" r="1.6" fill="#222"/></svg></div>
<div class="a" style="left:518px;top:32px;width:1402px;height:68px;background:#ebeef3"></div>
<div class="a bd" style="left:518px;top:100px;width:1402px;height:1px"></div>
<div class="btng" style="left:522px;top:34px;width:515px;height:28px"><div class="btn" style="width:32px"><svg width="18" height="18" viewBox="0 0 18 18" style="display:block;overflow:visible"><g transform="rotate(-45 9 9)" fill="none" stroke="#111" stroke-width="1.45"><path d="M-1.6 9H3.4"/><path d="M7.3 5H6.2A3.1 4 0 0 0 6.2 13H7.3"/><path d="M7.3 3.7V14.3M10.7 3.7V14.3"/><path d="M10.7 5H11.8A3.1 4 0 0 1 11.8 13H10.7"/><path d="M14.6 9H19.6"/></g></svg></div><div class="btn" style="width:449px;justify-content:flex-start;padding-left:9px;font-size:14px;letter-spacing:0.45px">public.Cars/car-management/postgres@demo</div><div class="btn" style="width:32px"><svg width="16" height="16" viewBox="0 0 16 16" style="display:block;overflow:visible"><ellipse cx="6.6" cy="2.7" rx="6.2" ry="2.4" fill="#111"/><path d="M0.4 4.6C1.2 5.8 3.6 6.4 6.6 6.4C8.2 6.4 9.4 6.2 10.4 5.9L8.4 7.4V9.6C7.8 9.7 7.2 9.7 6.6 9.7C3.4 9.7 0.4 8.9 0.4 7.6ZM12.8 4.6V6.4L11.6 5.7C12.2 5.4 12.6 5 12.8 4.6ZM0.4 9.1C1.2 10.3 3.6 10.9 6.6 10.9L8.4 10.8V14.3L6.6 14.4C3.4 14.4 0.4 13.5 0.4 12.2Z" fill="#111"/><path d="M9.4 7.2L15.6 11L9.4 14.8Z" fill="#111"/></svg></div></div>
<div class="btng" style="left:1883px;top:34px;width:33px;height:28px"><div class="btn" style="width:31px"><svg width="16" height="16" viewBox="0 0 16 16" style="display:block;overflow:visible"><path d="M8.6 2.3A5.7 5.7 0 0 1 8.6 13.7" fill="none" stroke="#111" stroke-width="1.6"/><path d="M6.6 13.4L5.4 12.8M3.3 10.6L2.8 9.4M2.7 6.8L3.2 5.5" fill="none" stroke="#111" stroke-width="1.6" stroke-linecap="round"/><path d="M5.6 2.3L8.8 0V4.6Z" fill="#111"/></svg></div></div>
<div class="btng" style="left:522px;top:68px;width:86px;height:28px"><div class="btn dis" style="width:32px"><svg width="16" height="16" viewBox="0 0 16 16" style="display:block;overflow:visible"><path d="M0.8 2.5H6L7.8 4.3H15.2V13.5H0.8Z" fill="#6b6b6b" stroke="#6b6b6b" stroke-width="0.8" stroke-linejoin="round"/></svg></div><div class="btn dis" style="width:33px"><svg width="16" height="16" viewBox="0 0 16 16" style="display:block;overflow:visible"><path d="M1.5 1.5H12L14.5 4V14.5H1.5Z" fill="#6b6b6b" stroke="#6b6b6b" stroke-linejoin="round"/><rect x="3.5" y="3" width="7.5" height="3.5" fill="#f5f6f9"/><circle cx="8" cy="10.5" r="2" fill="#f5f6f9"/></svg></div><div class="btn dis" style="width:19px"><svg width="10" height="6" viewBox="0 0 10 6" style="display:block;overflow:visible"><path d="M1 1L5 5L9 1" fill="none" stroke="#6b6b6b" stroke-width="1.4"/></svg></div></div>
<div class="btng" style="left:612px;top:68px;width:47px;height:28px"><div class="btn dis" style="width:45px"><svg width="28" height="16" viewBox="0 0 28 16" style="display:block;overflow:visible"><path d="M1.5 14.5L2.2 11.5L10.5 3.2L13 5.7L4.7 14Z" fill="#6b6b6b"/><path d="M11.3 2.4L12.5 1.2L15 3.7L13.8 4.9Z" fill="#6b6b6b"/><path d="M18 6L22 10L26 6" fill="none" stroke="#6b6b6b" stroke-width="1.4"/></svg></div></div>
<div class="a" style="left:664px;top:68px;width:53px;height:28px;background:#326690;border-radius:4px"><svg class="a" style="left:10px;top:6px" width="16" height="16" viewBox="0 0 16 16"><path d="M0.6 0.8H13.2L8.9 7.2V13.8H4.9V7.2Z" fill="#fff" stroke="#fff" stroke-width="0.4" stroke-linejoin="round"/></svg><svg class="a" style="left:38px;top:11px" width="10" height="6" viewBox="0 0 10 6"><path d="M1 1L5 5L9 1" fill="none" stroke="#fff" stroke-width="1.6"/></svg></div>
<div class="btng" style="left:722px;top:67px;width:109px;height:29px;border-color:#e6e8ec"><div class="btn" style="width:107px;justify-content:flex-start;padding-left:10px;font-size:14px;letter-spacing:0.4px">No limit</div></div>
<div class="a" style="left:808px;top:80px"><svg width="10" height="6" viewBox="0 0 10 6" style="display:block;overflow:visible"><path d="M0 0H10L5 5.5Z" fill="#222"/></svg></div>
<div class="btng" style="left:836px;top:68px;width:85px;height:28px"><div class="btn dis" style="width:32px"><svg width="14" height="14" viewBox="0 0 14 14" style="display:block;overflow:visible"><rect x="1.5" y="1.5" width="11" height="11" rx="1.8" fill="#6b6b6b"/></svg></div><div class="btn" style="width:33px"><svg width="14" height="14" viewBox="0 0 14 14" style="display:block;overflow:visible"><path d="M2.5 1L12.5 7L2.5 13Z" fill="#111"/></svg></div><div class="btn dis" style="width:18px"><svg width="10" height="6" viewBox="0 0 10 6" style="display:block;overflow:visible"><path d="M1 1L5 5L9 1" fill="none" stroke="#6b6b6b" stroke-width="1.4"/></svg></div></div>
<div class="btng" style="left:926px;top:68px;width:85px;height:28px"><div class="btn dis" style="width:33px"><svg width="14" height="14" viewBox="0 0 14 14" style="display:block;overflow:visible"><rect x="0.5" y="0.5" width="13" height="13" rx="1.8" fill="#6b6b6b"/><path d="M4.8 3.5H9.4M4.8 7H9M4.8 10.5H9.4M4.8 3.5V10.5" fill="none" stroke="#f5f6f9" stroke-width="1.6"/></svg></div><div class="btn dis" style="width:32px"><svg width="14" height="14" viewBox="0 0 14 14" style="display:block;overflow:visible"><rect x="0.5" y="0.5" width="13" height="13" rx="1.8" fill="#6b6b6b"/><path d="M4 4V10.5M7 6.5V10.5M10 8.5V10.5" stroke="#f5f6f9" stroke-width="1.6"/></svg></div><div class="btn dis" style="width:18px"><svg width="10" height="6" viewBox="0 0 10 6" style="display:block;overflow:visible"><path d="M1 1L5 5L9 1" fill="none" stroke="#6b6b6b" stroke-width="1.4"/></svg></div></div>
<div class="btng" style="left:1016px;top:68px;width:66px;height:28px"><div class="btn dis" style="width:32px"><svg width="18" height="16" viewBox="0 0 18 16" style="display:block;overflow:visible"><ellipse cx="7" cy="3" rx="6" ry="2.2" fill="#6b6b6b"/><path d="M1 4.6V6.6C1 7.8 3.6 8.8 7 8.8L8.5 8.7V5.4L7 5.4C3.6 5.4 1 4.6 1 4.6ZM1 8.4V10.6C1 11.8 3.6 12.8 7 12.8L7.5 12.7V9.5L7 9.6C3.6 9.6 1 8.6 1 8.4Z" fill="#6b6b6b"/><circle cx="12.2" cy="11" r="4.6" fill="#6b6b6b" stroke="#f5f6f9" stroke-width="0.8"/><path d="M10 11L11.6 12.6L14.5 9.5" fill="none" stroke="#f5f6f9" stroke-width="1.3"/></svg></div><div class="btn dis" style="width:32px"><svg width="18" height="16" viewBox="0 0 18 16" style="display:block;overflow:visible"><ellipse cx="7" cy="3" rx="6" ry="2.2" fill="#6b6b6b"/><path d="M1 4.6V6.6C1 7.8 3.6 8.8 7 8.8L8.5 8.7V5.4L7 5.4C3.6 5.4 1 4.6 1 4.6ZM1 8.4V10.6C1 11.8 3.6 12.8 7 12.8L7.5 12.7V9.5L7 9.6C3.6 9.6 1 8.6 1 8.4Z" fill="#6b6b6b"/><circle cx="12.2" cy="11" r="4.6" fill="#6b6b6b" stroke="#f5f6f9" stroke-width="0.8"/><path d="M10 9.5A2.8 2.8 0 1 1 12.2 14" fill="none" stroke="#f5f6f9" stroke-width="1.2"/><path d="M9 8L9.5 11H12Z" fill="#f5f6f9"/></svg></div></div>
<div class="btng" style="left:1087px;top:68px;width:47px;height:28px"><div class="btn dis" style="width:45px"><svg width="28" height="16" viewBox="0 0 28 16" style="display:block;overflow:visible"><text x="0" y="5" font-size="4.5" font-family="Liberation Sans" fill="#6b6b6b">1</text><text x="0" y="10" font-size="4.5" font-family="Liberation Sans" fill="#6b6b6b">2</text><text x="0" y="15" font-size="4.5" font-family="Liberation Sans" fill="#6b6b6b">3</text><path d="M4.5 3H13M4.5 8H13M4.5 13H13" stroke="#6b6b6b" stroke-width="1.4"/><path d="M17 6L21 10L25 6" fill="none" stroke="#6b6b6b" stroke-width="1.4"/></svg></div></div>
<div class="btng" style="left:1139px;top:68px;width:34px;height:28px"><div class="btn" style="width:32px"><svg width="18" height="18" viewBox="0 0 18 18" style="display:block;overflow:visible"><circle cx="9" cy="9" r="8.2" fill="#111"/><path d="M6.3 7C6.3 5.2 7.5 4.3 9.1 4.3C10.8 4.3 11.9 5.3 11.9 6.8C11.9 8.6 9.5 8.9 9.5 10.7" fill="none" stroke="#fff" stroke-width="1.9"/><circle cx="9.5" cy="13.4" r="1.2" fill="#fff"/></svg></div></div>
<div class="t" style="left:528px;top:108px;font-size:14px;color:#326690">Query</div>
<div class="t" style="left:585px;top:108px;font-size:14px;letter-spacing:0.1px">Query History</div>
<div class="a" style="left:518px;top:129px;width:57px;height:2px;background:#326690"></div>
<div class="a bd" style="left:518px;top:131px;width:1402px;height:1px"></div>
<div class="a bd" style="left:1537px;top:101px;width:1px;height:429px"></div>
<div class="t" style="left:1547px;top:109px;font-size:14px;color:#326690;letter-spacing:0.25px">Scratch Pad</div>
<div class="a" style="left:1632px;top:110px"><svg width="12" height="12" viewBox="0 0 12 12" style="display:block;overflow:visible"><path d="M1.5 1.5L10.5 10.5M10.5 1.5L1.5 10.5" stroke="#222" stroke-width="1.6"/></svg></div>
<div class="a" style="left:1538px;top:129px;width:113px;height:2px;background:#326690"></div>
<div class="a" style="left:518px;top:132px;width:34px;height:398px;background:#ebeef3"></div>
<div class="t" style="left:532px;top:140px;font-size:11.5px;font-family:'Liberation Mono',monospace;color:#222">1</div>
<div class="t" style="left:532px;top:160px;font-size:11.5px;font-family:'Liberation Mono',monospace;color:#222">2</div>
<div class="t" style="left:556px;top:140px;font-size:14.3px;font-family:'Liberation Mono',monospace;color:#222;"><span style="color:#8c168b;-webkit-text-stroke:0.5px">SELECT</span> <span style="position:relative;top:2px">*</span> <span style="color:#8c168b;-webkit-text-stroke:0.5px">FROM</span> <span style="color:#8c168b;-webkit-text-stroke:0.5px">public</span>."Cars"</div>
<div class="t" style="left:556px;top:160px;font-size:14.3px;font-family:'Liberation Mono',monospace;color:#222;"><span style="color:#8c168b;-webkit-text-stroke:0.5px">ORDER BY</span> "Id" <span style="color:#8c168b;-webkit-text-stroke:0.5px">ASC</span></div>
<div class="a bd" style="left:518px;top:530px;width:1402px;height:1px"></div>
<div class="t" style="left:528px;top:538px;font-size:14px;color:#326690;letter-spacing:0.1px">Data Output</div>
<div class="t" style="left:625px;top:538px;font-size:14px;letter-spacing:0.2px">Messages</div>
<div class="t" style="left:710px;top:538px;font-size:14px;letter-spacing:0.55px">Notifications</div>
<div class="a" style="left:518px;top:559px;width:96px;height:2px;background:#326690"></div>
<div class="a" style="left:518px;top:561px;width:1402px;height:33px;background:#ebeef3"></div>
<div class="btng" style="left:520px;top:564px;width:171px;height:28px"><div class="btn" style="width:32px"><svg width="21" height="16" viewBox="0 0 21 16" style="display:block;overflow:visible"><path d="M0.5 1.8H12M0.5 5.6H12M0.5 9.4H8" stroke="#111" stroke-width="1.6"/><path d="M10.5 11.2H20M15.2 6.5V16" stroke="#111" stroke-width="1.7"/></svg></div><div class="btn dis" style="width:33px"><svg width="16" height="18" viewBox="0 0 16 18" style="display:block;overflow:visible"><path d="M0.9 12.5V1H11" fill="none" stroke="#6b6b6b" stroke-width="1.5"/><path d="M3.8 3.8H10.5L15 8.3V16.8C15 17.3 14.6 17.6 14.1 17.6H4.7C4.2 17.6 3.8 17.3 3.8 16.8Z" fill="#6b6b6b"/><path d="M10.5 4.2V8.3H14.6Z" fill="#f5f6f9"/></svg></div><div class="btn" style="width:19px"><svg width="10" height="6" viewBox="0 0 10 6" style="display:block;overflow:visible"><path d="M1 1L5 5L9 1" fill="none" stroke="#222" stroke-width="1.6"/></svg></div><div class="btn" style="width:33px"><svg width="14" height="18" viewBox="0 0 14 18" style="display:block;overflow:visible"><rect x="0.8" y="2.6" width="12.4" height="14.6" rx="1.4" fill="none" stroke="#111" stroke-width="1.5"/><path d="M3.5 1.8H5.6C5.8 0.9 6.3 0.5 7 0.5C7.7 0.5 8.2 0.9 8.4 1.8H10.5V4.2H3.5Z" fill="#111"/></svg></div><div class="btn" style="width:19px"><svg width="10" height="6" viewBox="0 0 10 6" style="display:block;overflow:visible"><path d="M1 1L5 5L9 1" fill="none" stroke="#222" stroke-width="1.6"/></svg></div><div class="btn dis" style="width:33px"><svg width="12" height="16" viewBox="0 0 12 16" style="display:block;overflow:visible"><path d="M1 4H11V14C11 14.8 10.4 15.3 9.6 15.3H2.4C1.6 15.3 1 14.8 1 14Z" fill="#6b6b6b"/><path d="M0 2.2H12" stroke="#6b6b6b" stroke-width="1.4"/><rect x="3.8" y="0.5" width="4.4" height="1.6" fill="#6b6b6b"/></svg></div></div>
<div class="btng" style="left:695px;top:564px;width:34px;height:28px"><div class="btn dis" style="width:32px"><svg width="16" height="16" viewBox="0 0 16 16" style="display:block;overflow:visible"><ellipse cx="7" cy="2.6" rx="6.4" ry="2.2" fill="#6b6b6b"/><path d="M0.6 4.2V6.6C0.6 7.9 3.5 8.9 7 8.9L6 8.9V5.9C3.2 5.8 0.6 5 0.6 4.2ZM0.6 8.4V10.8C0.6 12.1 3.5 13.1 6 13.1V9.9C3.2 9.9 0.6 9.2 0.6 8.4ZM13.4 4.2V6.6L13 7H8V5.8C10.8 5.6 13.4 5 13.4 4.2Z" fill="#6b6b6b"/><path d="M6.8 7.8H13.8L15.6 9.6V15.6H6.8Z" fill="#6b6b6b"/><rect x="8.6" y="8.8" width="4.5" height="2.4" fill="#f5f6f9"/><rect x="10" y="12.4" width="2.2" height="2.2" fill="#f5f6f9"/></svg></div></div>
<div class="btng" style="left:733px;top:564px;width:34px;height:28px"><div class="btn" style="width:32px"><svg width="12" height="14" viewBox="0 0 12 14" style="display:block;overflow:visible"><path d="M4 0.5H8V5H11L6 10L1 5H4Z" fill="#111"/><path d="M0.5 13H11.5" stroke="#111" stroke-width="1.6"/></svg></div></div>
<div class="btng" style="left:771px;top:564px;width:34px;height:28px"><div class="btn" style="width:32px"><svg width="18" height="10" viewBox="0 0 18 10" style="display:block;overflow:visible"><path d="M1.2 8.2L6.5 2.2L11 6.5L16.5 1.2" fill="none" stroke="#111" stroke-width="1.5" stroke-linejoin="round"/><circle cx="1.4" cy="8" r="1.3" fill="#111"/><circle cx="6.5" cy="2.3" r="1.1" fill="#111"/><circle cx="11" cy="6.5" r="1.1" fill="#111"/><circle cx="16.4" cy="1.4" r="1.3" fill="#111"/></svg></div></div>
<div class="a bd" style="left:518px;top:594px;width:1402px;height:1px"></div>
<div class="a bd" style="left:562px;top:595px;width:1px;height:64px"></div>
<div class="a bd" style="left:658px;top:595px;width:1px;height:64px"></div>
<div class="a bd" style="left:738px;top:595px;width:1px;height:64px"></div>
<div class="a bd" style="left:818px;top:595px;width:1px;height:64px"></div>
<div class="a bd" style="left:898px;top:595px;width:1px;height:64px"></div>
<div class="a bd" style="left:518px;top:634px;width:381px;height:1px"></div>
<div class="a bd" style="left:518px;top:659px;width:381px;height:1px"></div>
<div class="t" style="left:569px;top:601px;font-size:12px;font-weight:bold">Id</div>
<div class="t" style="left:569px;top:617px;font-size:12px;color:#333">[PK] integer</div>
<div class="a" style="left:640px;top:609px"><svg width="12" height="12" viewBox="0 0 12 12" style="display:block;overflow:visible"><path d="M0.8 11.2L1.3 8.8L8 2.1L9.9 4L3.2 10.7Z" fill="#222"/><path d="M8.8 1.3L9.8 0.3L11.7 2.2L10.7 3.2Z" fill="#222"/></svg></div>
<div class="t" style="left:665px;top:601px;font-size:12px;font-weight:bold">Make</div>
<div class="t" style="left:665px;top:617px;font-size:12px;color:#333">text</div>
<div class="a" style="left:720px;top:609px"><svg width="12" height="12" viewBox="0 0 12 12" style="display:block;overflow:visible"><path d="M0.8 11.2L1.3 8.8L8 2.1L9.9 4L3.2 10.7Z" fill="#222"/><path d="M8.8 1.3L9.8 0.3L11.7 2.2L10.7 3.2Z" fill="#222"/></svg></div>
<div class="t" style="left:745px;top:601px;font-size:12px;font-weight:bold">Model</div>
<div class="t" style="left:745px;top:617px;font-size:12px;color:#333">text</div>
<div class="a" style="left:800px;top:609px"><svg width="12" height="12" viewBox="0 0 12 12" style="display:block;overflow:visible"><path d="M0.8 11.2L1.3 8.8L8 2.1L9.9 4L3.2 10.7Z" fill="#222"/><path d="M8.8 1.3L9.8 0.3L11.7 2.2L10.7 3.2Z" fill="#222"/></svg></div>
<div class="t" style="left:825px;top:601px;font-size:12px;font-weight:bold">Year</div>
<div class="t" style="left:825px;top:617px;font-size:12px;color:#333">integer</div>
<div class="a" style="left:880px;top:609px"><svg width="12" height="12" viewBox="0 0 12 12" style="display:block;overflow:visible"><path d="M0.8 11.2L1.3 8.8L8 2.1L9.9 4L3.2 10.7Z" fill="#222"/><path d="M8.8 1.3L9.8 0.3L11.7 2.2L10.7 3.2Z" fill="#222"/></svg></div>
<div class="t" style="left:527px;top:641px;font-size:12px">1</div>
<div class="t" style="left:563px;top:641px;width:86px;text-align:right;font-size:12px">101</div>
<div class="t" style="left:667px;top:641px;font-size:12px">Tesla</div>
<div class="t" style="left:747px;top:641px;font-size:12px">Model S</div>
<div class="t" style="left:819px;top:641px;width:71px;text-align:right;font-size:12px">2022</div>
<div class="a" style="left:923px;top:713px"><svg width="14" height="22" viewBox="0 0 14 22" style="display:block;overflow:visible"><path d="M1 1V16.5L4.8 13L7.5 19.5L10 18.5L7.3 12.2H12.5Z" fill="#fff" stroke="#222" stroke-width="1.1" stroke-linejoin="round"/></svg></div>
<div class="a bd" style="left:518px;top:959px;width:1402px;height:1px"></div>
<div class="a" style="left:518px;top:960px;width:1402px;height:24px;background:#ebeef3"></div>
<div class="t" style="left:530px;top:964px;font-size:14px;letter-spacing:0.2px">Total rows: 1 of 1</div>
<div class="a bd" style="left:652px;top:960px;width:1px;height:24px"></div>
<div class="t" style="left:665px;top:964px;font-size:14px;letter-spacing:0.15px">Query complete 00:00:01.432</div>
<div class="a bd" style="left:864px;top:960px;width:1px;height:24px"></div>
<div class="t" style="left:1834px;top:964px;font-size:14px">Ln 2, Col 19</div>
</body></html>
